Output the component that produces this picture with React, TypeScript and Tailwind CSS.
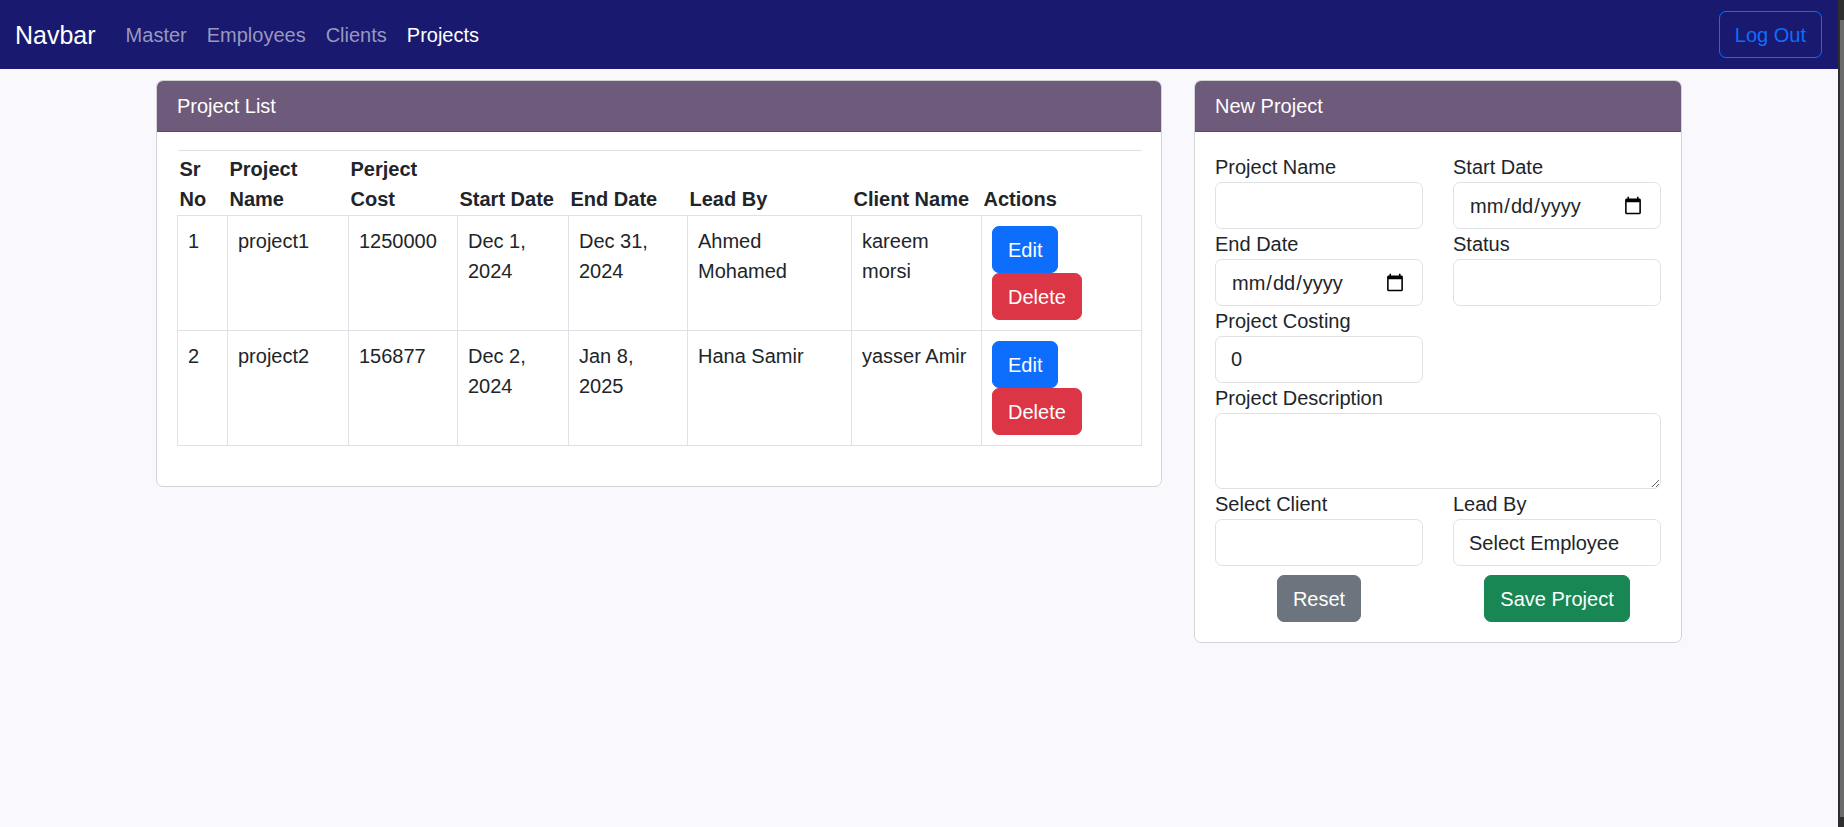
import React from "react";

const rows = [
  { sr: 1, name: "project1", cost: "1250000", start: "Dec 1, 2024", end: "Dec 31, 2024", lead: "Ahmed Mohamed", client: "kareem morsi" },
  { sr: 2, name: "project2", cost: "156877", start: "Dec 2, 2024", end: "Jan 8, 2025", lead: "Hana Samir", client: "yasser Amir" },
];

const th = "text-left align-bottom font-bold text-[20px] leading-[30px] text-[#212529] pt-[3px] pb-[1px] px-[2px]";
const td = "align-top border border-[#dee2e6] p-[10px] text-[20px] leading-[30px] text-[#212529]";
const inputCls = "block w-full h-[47px] rounded-[7px] border border-[#dee2e6] bg-white px-[15px] text-[20px] text-[#212529] outline-none font-['Liberation_Sans',Arial,sans-serif]";
const labelCls = "block text-[20px] leading-[30px] text-[#212529]";

function Card({ title, width, children, bodyCls }: { title: string; width: string; children: React.ReactNode; bodyCls: string }) {
  return (
    <div className={`${width} shrink-0 rounded-[7px] border border-[#d4d4d8] bg-white overflow-hidden`}>
      <div className="bg-[#6e5a7b] border-b border-[#5a4a64] px-[20px] py-[10px] text-[20px] leading-[30px] text-white">{title}</div>
      <div className={bodyCls}>{children}</div>
    </div>
  );
}

export default function App() {
  return (
    <div className="flex h-[827px] w-full bg-[#f8f8fd] font-['Liberation_Sans',Arial,sans-serif] overflow-hidden">
      <div className="flex-1 min-w-0">
        <nav className="h-[69px] bg-[#191970] flex items-center pl-[15px] pr-[16px]">
          <span className="text-[25px] leading-[36px] text-white mr-[20px]">Navbar</span>
          <span className="px-[10px] text-[20px] leading-[30px] text-[#9898bf]">Master</span>
          <span className="px-[10px] text-[20px] leading-[30px] text-[#9898bf]">Employees</span>
          <span className="px-[10px] text-[20px] leading-[30px] text-[#9898bf]">Clients</span>
          <span className="px-[10px] text-[20px] leading-[30px] text-white">Projects</span>
          <div className="ml-auto">
            <button className="h-[47px] px-[15px] rounded-[7px] border border-[#0d6efd] text-[#0d6efd] text-[20px] leading-[30px]">Log Out</button>
          </div>
        </nav>

        <div className="flex items-start gap-[32px] pl-[156px] pt-[11px]">
          <Card title="Project List" width="w-[1006px]" bodyCls="pl-[20px] pr-[20px] pt-[18px] pb-[40px]">
            <table className="table-fixed border-collapse w-[964px]">
              <colgroup>
                <col className="w-[50px]" />
                <col className="w-[121px]" />
                <col className="w-[109px]" />
                <col className="w-[111px]" />
                <col className="w-[119px]" />
                <col className="w-[164px]" />
                <col className="w-[130px]" />
                <col className="w-[160px]" />
              </colgroup>
              <thead>
                <tr className="border-t border-[#dee2e6]">
                  <th className={th}>Sr No</th>
                  <th className={th}>Project Name</th>
                  <th className={th}>Perject Cost</th>
                  <th className={th}>Start Date</th>
                  <th className={th}>End Date</th>
                  <th className={th}>Lead By</th>
                  <th className={th}>Client Name</th>
                  <th className={th}>Actions</th>
                </tr>
              </thead>
              <tbody>
                {rows.map((r) => (
                  <tr key={r.sr}>
                    <td className={td}>{r.sr}</td>
                    <td className={td}>{r.name}</td>
                    <td className={td}>{r.cost}</td>
                    <td className={td}>{r.start}</td>
                    <td className={td}>{r.end}</td>
                    <td className={td}>{r.lead}</td>
                    <td className={td}>{r.client}</td>
                    <td className={td}>
                      <div className="flex flex-col items-start">
                        <button className="h-[47px] px-[15px] rounded-[7px] border border-[#0d6efd] bg-[#0d6efd] text-white text-[20px] leading-[30px]">Edit</button>
                        <button className="h-[47px] px-[15px] rounded-[7px] border border-[#dc3545] bg-[#dc3545] text-white text-[20px] leading-[30px]">Delete</button>
                      </div>
                    </td>
                  </tr>
                ))}
              </tbody>
            </table>
          </Card>

          <Card title="New Project" width="w-[488px]" bodyCls="px-[20px] pt-[20px] pb-[20px]">
            <div className="grid grid-cols-2 gap-x-[30px]">
              <div>
                <label className={labelCls}>Project Name</label>
                <input className={inputCls} type="text" />
              </div>
              <div>
                <label className={labelCls}>Start Date</label>
                <input className={inputCls} type="date" />
              </div>
              <div>
                <label className={labelCls}>End Date</label>
                <input className={inputCls} type="date" />
              </div>
              <div>
                <label className={labelCls}>Status</label>
                <input className={inputCls} type="text" />
              </div>
              <div>
                <label className={labelCls}>Project Costing</label>
                <input className={inputCls} type="text" defaultValue="0" />
              </div>
              <div />
              <div className="col-span-2">
                <label className={labelCls}>Project Description</label>
                <textarea className="block w-full h-[76px] rounded-[7px] border border-[#dee2e6] bg-white px-[15px] py-[7px] text-[20px] text-[#212529] outline-none font-['Liberation_Sans',Arial,sans-serif]" />
              </div>
              <div>
                <label className={labelCls}>Select Client</label>
                <select className={`${inputCls} appearance-none`}></select>
              </div>
              <div>
                <label className={labelCls}>Lead By</label>
                <select className={`${inputCls} appearance-none`}>
                  <option>Select Employee</option>
                </select>
              </div>
              <div className="flex justify-center mt-[9px]">
                <button className="h-[47px] px-[15px] rounded-[7px] border border-[#6c757d] bg-[#6c757d] text-white text-[20px] leading-[30px]">Reset</button>
              </div>
              <div className="flex justify-center mt-[9px]">
                <button className="h-[47px] px-[15px] rounded-[7px] border border-[#198754] bg-[#198754] text-white text-[20px] leading-[30px]">Save Project</button>
              </div>
            </div>
          </Card>
        </div>
      </div>
      <div className="w-[6px] shrink-0 bg-[#2e2e2e] flex">
        <div className="ml-[2px] w-[4px] mt-[20px] h-[797px] bg-[#6b6b6b]" />
      </div>
    </div>
  );
}
